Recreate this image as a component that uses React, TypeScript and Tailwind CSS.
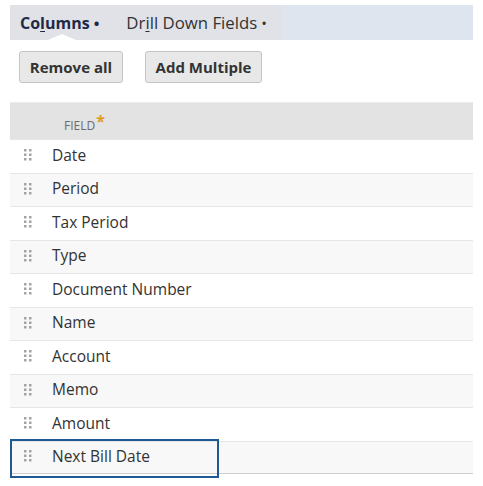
const FIELDS = [
  'Date',
  'Period',
  'Tax Period',
  'Type',
  'Document Number',
  'Name',
  'Account',
  'Memo',
  'Amount',
  'Next Bill Date',
];

function DragHandle() {
  return (
    <svg width="8" height="12" viewBox="0 0 8 12" className="shrink-0">
      {[0, 1, 2].map(r =>
        [0, 1].map(c => (
          <rect key={`${r}-${c}`} x={c * 5} y={r * 4.5} width="2.5" height="2.5" fill="#a3a3a3" />
        ))
      )}
    </svg>
  );
}

export default function App() {
  return (
    <div
      className="w-[483px] h-[486px] bg-white pt-[5px] pl-[10px] text-[#333]"
      style={{ fontFamily: '"Open Sans", "Noto Sans", sans-serif' }}
    >
      {/* Tab strip */}
      <div className="w-[463px] h-[35px] flex bg-[#dfe5ef]">
        <div className="flex items-center h-full w-[272px] bg-[#e0e2e8]">
          <div className="relative h-full flex items-center pl-[10px] pr-[27px]">
            <span className="text-[16px] font-bold text-[#1f2a48]">
              Co<span className="underline underline-offset-2">l</span>umns
              <span className="ml-[4px] text-[15px]">•</span>
            </span>
            <div className="absolute bottom-0 left-[38px] w-0 h-0 border-l-[14px] border-r-[14px] border-b-[6px] border-l-transparent border-r-transparent border-b-white" />
          </div>
          <span className="text-[16.8px] text-[#333]">
            Dr<span className="underline underline-offset-2">i</span>ll Down Fields
            <span className="ml-[4px] text-[15px]">•</span>
          </span>
        </div>
      </div>

      {/* Buttons */}
      <div className="flex gap-[22px] pl-[9px] mt-[11px]">
        <button className="h-[32px] w-[104px] rounded-[3px] border border-[#c4c4c4] bg-[#e8e8e8] text-[15px] font-bold text-[#333]">
          Remove all
        </button>
        <button className="h-[32px] w-[117px] rounded-[3px] border border-[#c4c4c4] bg-[#e8e8e8] text-[15px] font-bold text-[#333]">
          Add Multiple
        </button>
      </div>

      {/* Table */}
      <div className="w-[463px] mt-[19px]">
        <div className="h-[37px] bg-[#e3e3e3] border-t border-[#ececec] flex items-start pt-[10px] pl-[54px]">
          <span className="text-[12px] uppercase text-[#6b6b6b] mt-[4px]">Field</span>
          <span className="text-[16px] font-bold text-[#e39b1b] leading-none ml-[1px]">*</span>
        </div>
        {FIELDS.map((f, i) => {
          const last = i === FIELDS.length - 1;
          return (
            <div
              key={f}
              className={`relative h-[33.5px] flex items-center pb-[2px] border-t border-[#e6e6e6] ${
                i % 2 === 1 ? 'bg-[#f8f8f8]' : 'bg-white'
              } ${last ? 'border-b border-b-[#cfcfcf]' : ''}`}
            >
              <div className="w-[42px] pl-[14px] flex items-center">
                <DragHandle />
              </div>
              <span className="text-[15.5px] text-[#333]">{f}</span>
              {last && (
                <div className="absolute left-0 top-[-3px] w-[209px] h-[39px] border-2 border-[#1d5a94]" />
              )}
            </div>
          );
        })}
      </div>
    </div>
  );
}
